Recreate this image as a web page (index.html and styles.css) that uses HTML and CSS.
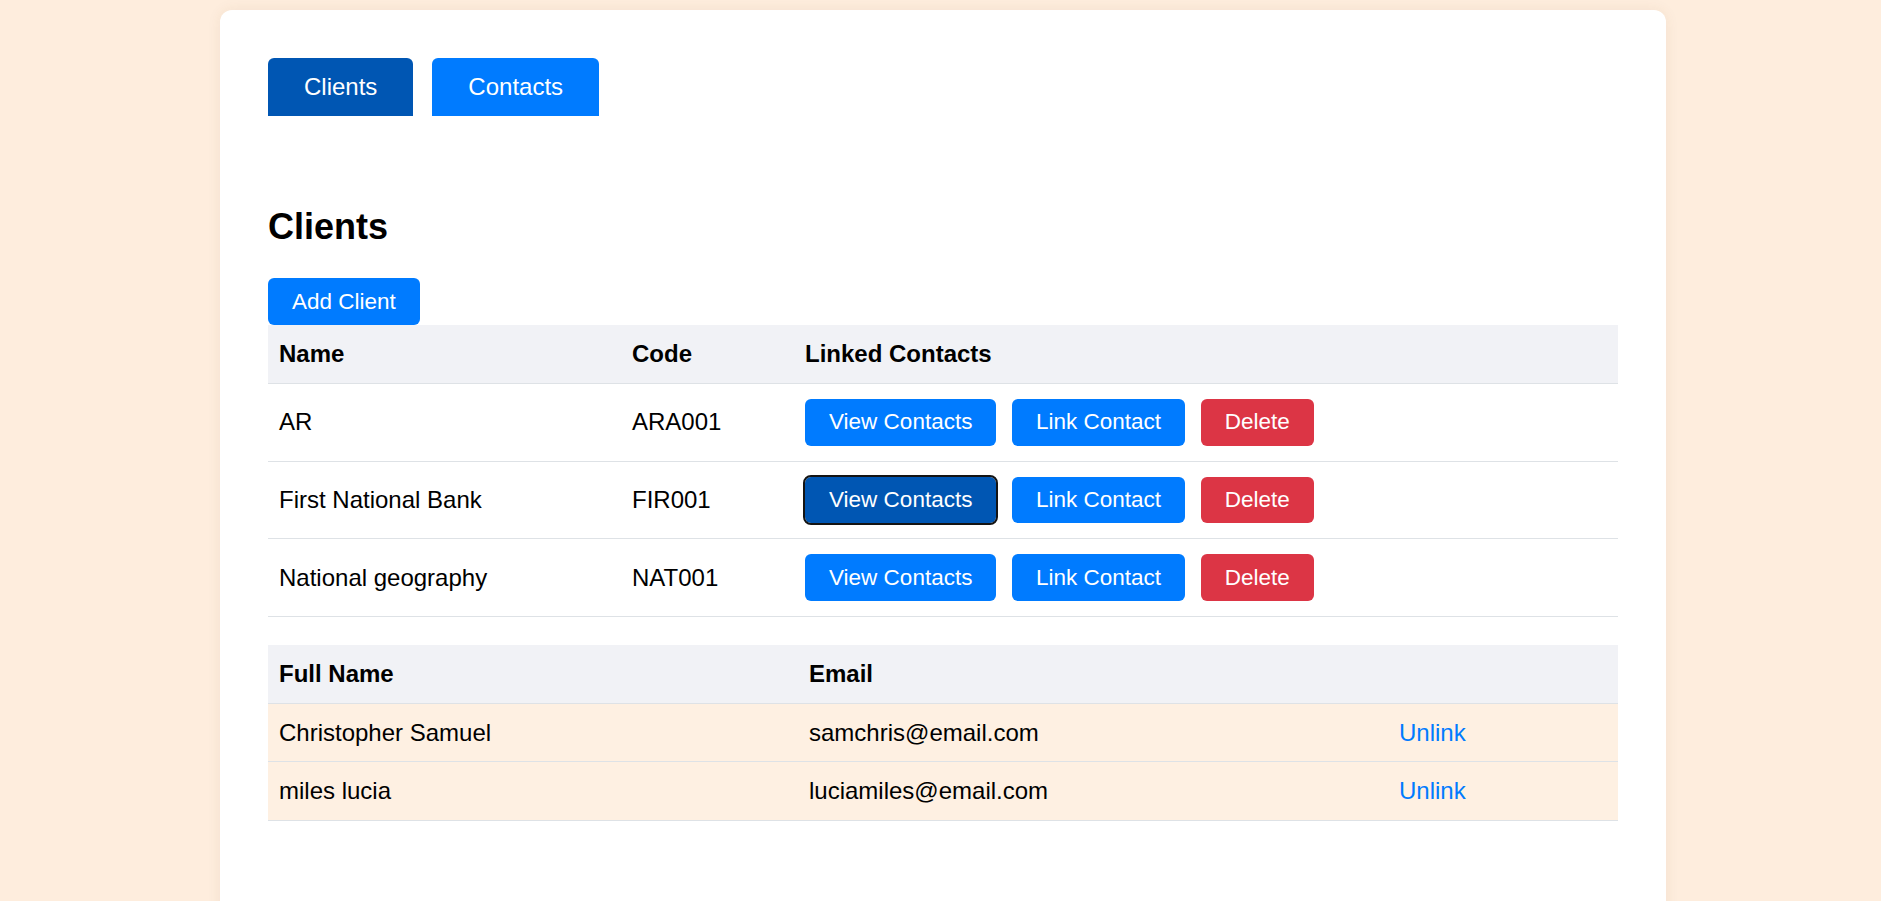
FILE: index.html
```html
<!DOCTYPE html>
<html lang="en">
<head>
<meta charset="utf-8">
<title>Clients</title>
<link rel="stylesheet" href="styles.css">
</head>
<body>
<div class="card">
  <nav class="tabs">
    <button class="tab tab-active">Clients</button>
    <button class="tab">Contacts</button>
  </nav>

  <h2 class="title">Clients</h2>

  <div class="toolbar">
    <button class="btn btn-primary">Add Client</button>
  </div>

  <table class="grid clients">
    <colgroup>
      <col class="c-name">
      <col class="c-code">
      <col>
    </colgroup>
    <thead>
      <tr><th>Name</th><th>Code</th><th>Linked Contacts</th></tr>
    </thead>
    <tbody>
      <tr>
        <td>AR</td><td>ARA001</td>
        <td><div class="actions"><button class="btn btn-primary">View Contacts</button><button class="btn btn-primary">Link Contact</button><button class="btn btn-danger">Delete</button></div></td>
      </tr>
      <tr>
        <td>First National Bank</td><td>FIR001</td>
        <td><div class="actions"><button class="btn btn-primary btn-focus">View Contacts</button><button class="btn btn-primary">Link Contact</button><button class="btn btn-danger">Delete</button></div></td>
      </tr>
      <tr>
        <td>National geography</td><td>NAT001</td>
        <td><div class="actions"><button class="btn btn-primary">View Contacts</button><button class="btn btn-primary">Link Contact</button><button class="btn btn-danger">Delete</button></div></td>
      </tr>
    </tbody>
  </table>

  <table class="grid contacts">
    <colgroup>
      <col class="c-full">
      <col class="c-email">
      <col>
    </colgroup>
    <thead>
      <tr><th>Full Name</th><th>Email</th><th></th></tr>
    </thead>
    <tbody>
      <tr><td>Christopher Samuel</td><td>samchris@email.com</td><td><button class="link">Unlink</button></td></tr>
      <tr><td>miles lucia</td><td>luciamiles@email.com</td><td><button class="link">Unlink</button></td></tr>
    </tbody>
  </table>
</div>
</body>
</html>
```

FILE: styles.css
```css
html, body {
  margin: 0;
  padding: 0;
}

body {
  background: #feeddd;
  font-family: "Liberation Sans", Arial, sans-serif;
  font-size: 24px;
  color: #000;
}

.card {
  box-sizing: border-box;
  width: 1446px;
  min-height: 940px;
  margin: 10px 0 0 220px;
  padding: 48px;
  background: #ffffff;
  border-radius: 12px;
  box-shadow: 0 0 14px rgba(120, 80, 40, 0.08);
}

.tabs {
  display: flex;
  gap: 19px;
}

.tab {
  height: 58px;
  padding: 0 36px;
  border: none;
  border-radius: 6px 6px 0 0;
  background: #007bff;
  color: #fff;
  font-family: inherit;
  font-size: 24px;
  line-height: 27.6px;
  cursor: pointer;
}

.tab-active {
  background: #0056b3;
}

.title {
  margin: 90px 0 31px;
  font-size: 36px;
  line-height: 41.4px;
  font-weight: bold;
}

.toolbar {
  display: flex;
}

.btn {
  border: none;
  border-radius: 6px;
  padding: 10.4px 24px;
  font-family: inherit;
  font-size: 22.5px;
  line-height: 26px;
  color: #fff;
  cursor: pointer;
}

.btn-primary {
  background: #007bff;
}

.btn-danger {
  background: #dc3545;
}

.btn-focus {
  background: #0056b3;
  outline: 2px solid #141414;
  outline-offset: 0;
}

.grid {
  width: 1350px;
  table-layout: fixed;
  border-collapse: collapse;
}

.grid th,
.grid td {
  padding: 15px 11px;
  text-align: left;
  vertical-align: middle;
  line-height: 27.6px;
  border-bottom: 1px solid #dee2e6;
}

.grid th {
  background: #f1f2f6;
  font-weight: bold;
}

.c-name { width: 353px; }
.c-code { width: 173px; }
.c-full { width: 530px; }
.c-email { width: 590px; }

.actions {
  display: flex;
  gap: 15.6px;
}

.contacts {
  margin-top: 28px;
}

.contacts tbody td {
  background: #fef0e2;
}

.link {
  border: none;
  background: none;
  padding: 0;
  font-family: inherit;
  font-size: 24px;
  line-height: 27.6px;
  color: #007bff;
  cursor: pointer;
}
```
